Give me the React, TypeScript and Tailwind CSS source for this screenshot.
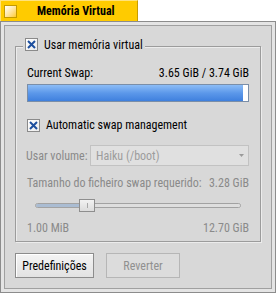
const CheckBox = () => (
  <span className="flex h-[13px] w-[13px] shrink-0 items-center justify-center border border-[#8a8a8a] bg-gradient-to-br from-white to-[#ececec]">
    <svg width="9" height="9" viewBox="0 0 9 9">
      <path d="M1 1L8 8M8 1L1 8" stroke="#1d4f9e" strokeWidth="2" />
    </svg>
  </span>
);

export default function App() {
  return (
    <div className="h-[293px] w-[276px] whitespace-nowrap bg-white font-['Roboto_Condensed','Noto_Sans',sans-serif] text-[12px] leading-4 text-black">
      {/* window tab */}
      <div className="flex h-[21px] w-[138px] items-center border-l border-t border-r border-l-[#ffe27a] border-t-[#ffe27a] border-r-[#c79c00] bg-[#ffcb00]">
        <span className="ml-[3px] h-[13px] w-[13px] border border-[#c49a00] bg-gradient-to-br from-white to-[#ffcb00]" />
        <span className="ml-[20px] font-bold">Memória Virtual</span>
      </div>

      {/* window frame */}
      <div className="flex h-[272px] flex-col border border-[#8c8c8c] bg-[#e4e4e4] p-[3px]">
        <div className="flex flex-1 flex-col border border-[#a0a0a0] bg-[#d8d8d8] px-[10px]">
          <div className="relative mt-[20px] flex h-[196px] flex-col border border-[#9c9c9c] px-[11px] pt-[18px] shadow-[inset_1px_1px_0_#ececec,1px_1px_0_#ececec]">
            <div className="absolute left-[7px] top-[-10px] flex h-[15px] items-center gap-[6px] bg-[#d8d8d8] px-[2px]">
              <CheckBox />
              <span>Usar memória virtual</span>
            </div>

            <div className="flex h-4 items-center justify-between">
              <span>Current Swap:</span>
              <span>3.65 GiB / 3.74 GiB</span>
            </div>
            <div className="mt-[3px] flex h-[18px] border border-[#7a8ea8] bg-white">
              <div className="w-[215px] bg-gradient-to-b from-[#8cbcf6] via-[#5c98ea] to-[#3f80de]" />
            </div>

            <div className="mt-[15px] flex h-4 items-center gap-[6px]">
              <CheckBox />
              <span>Automatic swap management</span>
            </div>

            <div className="mt-[12px] flex h-[21px] items-center text-[#8a8a8a]">
              <span className="w-[64px] shrink-0 -ml-[1px]">Usar volume:</span>
              <div className="flex h-full flex-1 items-center justify-between border border-[#c2c2c2] bg-[#e0e0e0] pl-[5px] pr-[4px] text-[#9c9c9c]">
                <span>Haiku (/boot)</span>
                <svg width="5" height="3" viewBox="0 0 5 3">
                  <path d="M0 0H5L2.5 3Z" fill="#9a9a9a" />
                </svg>
              </div>
            </div>

            <div className="mt-[9px] flex h-4 items-center justify-between text-[#8a8a8a]">
              <span>Tamanho do ficheiro swap requerido:</span>
              <span>3.28 GiB</span>
            </div>

            <div className="relative mt-[8px] h-[13px] pt-[4px]">
              <div className="mx-[8px] flex h-[5px] overflow-hidden rounded-full border border-[#a2a2a2]">
                <div className="w-[48px] bg-[#aabcd2]" />
                <div className="flex-1 bg-[#dedede]" />
              </div>
              <div className="absolute left-[52px] top-0 flex h-[13px] w-[16px] items-center justify-center border border-[#8e8e8e] bg-gradient-to-b from-[#f2f2f2] to-[#dcdcdc]">
                <span className="h-[5px] w-px bg-[#a8a8a8]" />
              </div>
            </div>

            <div className="mt-[10px] flex h-[12px] items-center justify-between leading-[12px] text-[#8a8a8a]">
              <span>1.00 MiB</span>
              <span>12.70 GiB</span>
            </div>
          </div>

          <div className="mt-[11px] flex gap-[12px]">
            <button
              type="button"
              className="flex h-[25px] w-[79px] items-center justify-center border border-[#8c8c8c] bg-gradient-to-b from-[#f4f4f4] to-[#e2e2e2] shadow-[inset_1px_1px_0_#ffffff]"
            >
              Predefinições
            </button>
            <button
              type="button"
              className="flex h-[25px] w-[74px] items-center justify-center border border-[#b6b6b6] bg-[#dcdcdc] text-[#909090]"
            >
              Reverter
            </button>
          </div>
        </div>
      </div>
    </div>
  );
}
